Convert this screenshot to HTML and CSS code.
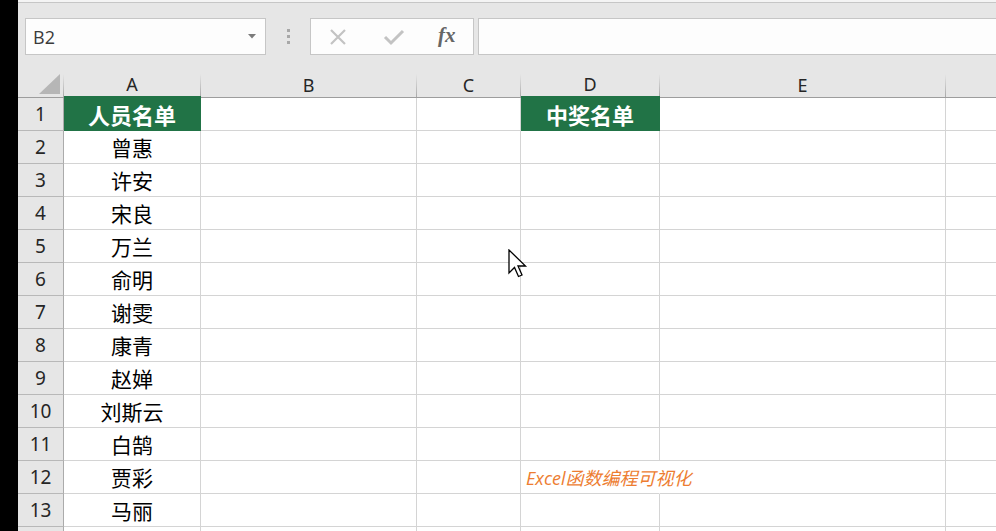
FILE: index.html
```html
<!DOCTYPE html>
<html lang="zh-CN">
<head>
<meta charset="utf-8">
<title>Excel</title>
<link rel="stylesheet" href="styles.css">
</head>
<body>
<div class="app">
  <div class="edge"></div>
  <div class="main">
    <div class="topline"></div>
    <div class="fbar">
      <div class="namebox">
        <span class="ref">B2</span>
        <svg class="caret" width="8" height="5" viewBox="0 0 8 5"><polygon points="0,0 8,0 4,4.5" fill="#7b7b7b"/></svg>
      </div>
      <div class="grip"><i></i><i></i><i></i></div>
      <div class="fbtns">
        <svg class="ico" width="20" height="20" viewBox="0 0 20 20"><path d="M3 3 L17 17 M17 3 L3 17" stroke="#c3c3c3" stroke-width="2.2" fill="none"/></svg>
        <svg class="ico" width="22" height="20" viewBox="0 0 22 20"><path d="M2 10 L8 16 L20 4" stroke="#c3c3c3" stroke-width="3" fill="none"/></svg>
        <span class="fx">fx</span>
      </div>
      <div class="finput"></div>
    </div>
    <div class="sheet">
      <div class="ch corner"><svg width="21" height="20" viewBox="0 0 21 20"><polygon points="21,0 21,20 0,20" fill="#b6b6b6"/></svg></div>
      <div class="ch sel">A</div>
      <div class="ch">B</div>
      <div class="ch">C</div>
      <div class="ch sel">D</div>
      <div class="ch">E</div>
      <div class="ch last"></div>

      <div class="rh">1</div><div class="c head">人员名单</div><div class="c"></div><div class="c"></div><div class="c head">中奖名单</div><div class="c"></div><div class="c"></div>
      <div class="rh">2</div><div class="c">曾惠</div><div class="c"></div><div class="c"></div><div class="c"></div><div class="c"></div><div class="c"></div>
      <div class="rh">3</div><div class="c">许安</div><div class="c"></div><div class="c"></div><div class="c"></div><div class="c"></div><div class="c"></div>
      <div class="rh">4</div><div class="c">宋良</div><div class="c"></div><div class="c"></div><div class="c"></div><div class="c"></div><div class="c"></div>
      <div class="rh">5</div><div class="c">万兰</div><div class="c"></div><div class="c"></div><div class="c"></div><div class="c"></div><div class="c"></div>
      <div class="rh">6</div><div class="c">俞明</div><div class="c"></div><div class="c"></div><div class="c"></div><div class="c"></div><div class="c"></div>
      <div class="rh">7</div><div class="c">谢雯</div><div class="c"></div><div class="c"></div><div class="c"></div><div class="c"></div><div class="c"></div>
      <div class="rh">8</div><div class="c">康青</div><div class="c"></div><div class="c"></div><div class="c"></div><div class="c"></div><div class="c"></div>
      <div class="rh">9</div><div class="c">赵婵</div><div class="c"></div><div class="c"></div><div class="c"></div><div class="c"></div><div class="c"></div>
      <div class="rh">10</div><div class="c">刘斯云</div><div class="c"></div><div class="c"></div><div class="c"></div><div class="c"></div><div class="c"></div>
      <div class="rh">11</div><div class="c">白鹄</div><div class="c"></div><div class="c"></div><div class="c"></div><div class="c"></div><div class="c"></div>
      <div class="rh">12</div><div class="c">贾彩</div><div class="c"></div><div class="c"></div><div class="c mark"><span>Excel函数编程可视化</span></div><div class="c"></div><div class="c"></div>
      <div class="rh">13</div><div class="c">马丽</div><div class="c"></div><div class="c"></div><div class="c"></div><div class="c"></div><div class="c"></div>
      <div class="rh"></div><div class="c"></div><div class="c"></div><div class="c"></div><div class="c"></div><div class="c"></div><div class="c"></div>
    </div>
  </div>
</div>
<svg class="cursor" width="20" height="30" viewBox="0 0 20 30"><path d="M1 1 L1 24 L6.5 18.5 L10.5 27.5 L14 26 L10 17 L17.5 17 Z" fill="#ffffff" stroke="#000000" stroke-width="1.3" stroke-linejoin="miter"/></svg>
</body>
</html>
```
FILE: styles.css
```css
html, body {
  margin: 0;
  padding: 0;
  width: 996px;
  height: 531px;
  overflow: hidden;
  background: #e6e6e6;
  font-family: "Noto Sans", "Noto Sans CJK SC", sans-serif;
}

.app {
  display: flex;
  width: 996px;
  height: 531px;
}

.edge {
  width: 18px;
  flex: none;
  background: #000;
}

.main {
  flex: 1;
  display: flex;
  flex-direction: column;
  min-width: 0;
  overflow: hidden;
}

.topline {
  height: 2px;
  background: #f4f4f4;
  border-bottom: 1px solid #c6c6c6;
  flex: none;
}

.fbar {
  height: 67px;
  box-sizing: border-box;
  padding: 15px 0 15px 7px;
  display: flex;
  align-items: stretch;
  flex: none;
}

.namebox {
  width: 241px;
  box-sizing: border-box;
  border: 1px solid #c6c6c6;
  background: #fdfdfd;
  display: flex;
  align-items: center;
  justify-content: space-between;
  padding: 0 9px 0 7px;
}

.ref {
  font-family: "Open Sans", "Noto Sans", sans-serif;
  font-size: 18px;
  color: #3a3a3a;
}

.caret {
  display: block;
}

.grip {
  width: 44px;
  display: flex;
  flex-direction: column;
  align-items: center;
  justify-content: center;
  gap: 3px;
}

.grip i {
  display: block;
  width: 3px;
  height: 3px;
  background: #a8a8a8;
}

.fbtns {
  width: 164px;
  box-sizing: border-box;
  border: 1px solid #c6c6c6;
  background: #fdfdfd;
  display: flex;
  align-items: center;
  padding: 0 0 0 17px;
}

.fbtns .ico {
  display: block;
}

.fbtns .ico:first-child {
  margin-right: 35px;
}

.fbtns .ico:nth-child(2) {
  margin-right: 33px;
}

.fx {
  font-family: "Liberation Serif", "DejaVu Serif", serif;
  font-style: italic;
  font-weight: bold;
  font-size: 21px;
  color: #666666;
  line-height: 1;
  margin-top: -3px;
}

.finput {
  flex: 1;
  margin-left: 4px;
  margin-right: -2px;
  border: 1px solid #c6c6c6;
  background: #fdfdfd;
}

.sheet {
  display: grid;
  grid-template-columns: 46px 137px 216px 104px 139px 286px 60px;
  grid-template-rows: 28px;
  grid-auto-rows: 33px;
  background: #ffffff;
  flex: 1;
  min-height: 0;
  position: relative;
}

.ch {
  box-sizing: border-box;
  background:
    linear-gradient(to bottom, #e6e6e6 0%, #e6e6e6 15%, #a9a9a9 100%) right top / 1px 100% no-repeat,
    #e6e6e6;
  border-bottom: 1px solid #9d9d9d;
  display: flex;
  align-items: center;
  justify-content: center;
  padding-right: 1px;
  font-size: 18px;
  color: #262626;
  padding-top: 2px;
}

.ch.sel {
  border-bottom: 2px solid #217346;
}

.ch.last {
  background: #e6e6e6;
}

.corner {
  justify-content: flex-end;
  align-items: flex-end;
  padding: 0 4px 3px 0;
}

.corner svg {
  display: block;
}

.rh {
  box-sizing: border-box;
  background: #e6e6e6;
  border-right: 1px solid #ababab;
  border-bottom: 1px solid #b8b8b8;
  display: flex;
  align-items: center;
  justify-content: center;
  font-size: 19px;
  color: #262626;
}

.c {
  box-sizing: border-box;
  border-right: 1px solid #d4d4d4;
  border-bottom: 1px solid #d4d4d4;
  display: flex;
  align-items: center;
  justify-content: center;
  font-family: "Noto Sans CJK SC", "Noto Sans", sans-serif;
  font-size: 21px;
  color: #000000;
  white-space: nowrap;
}

.c.head {
  background: #217346;
  border-color: #217346;
  color: #ffffff;
  font-weight: bold;
  font-size: 22px;
}

.c.mark {
  justify-content: flex-start;
  padding-left: 5px;
  border-right-color: transparent;
  overflow: visible;
  position: relative;
  z-index: 1;
}

.mark span {
  font-family: "Open Sans", "Noto Sans CJK SC", sans-serif;
  font-style: italic;
  font-size: 18px;
  color: #ed7d31;
}

.cursor {
  position: absolute;
  left: 508px;
  top: 249px;
}
```
